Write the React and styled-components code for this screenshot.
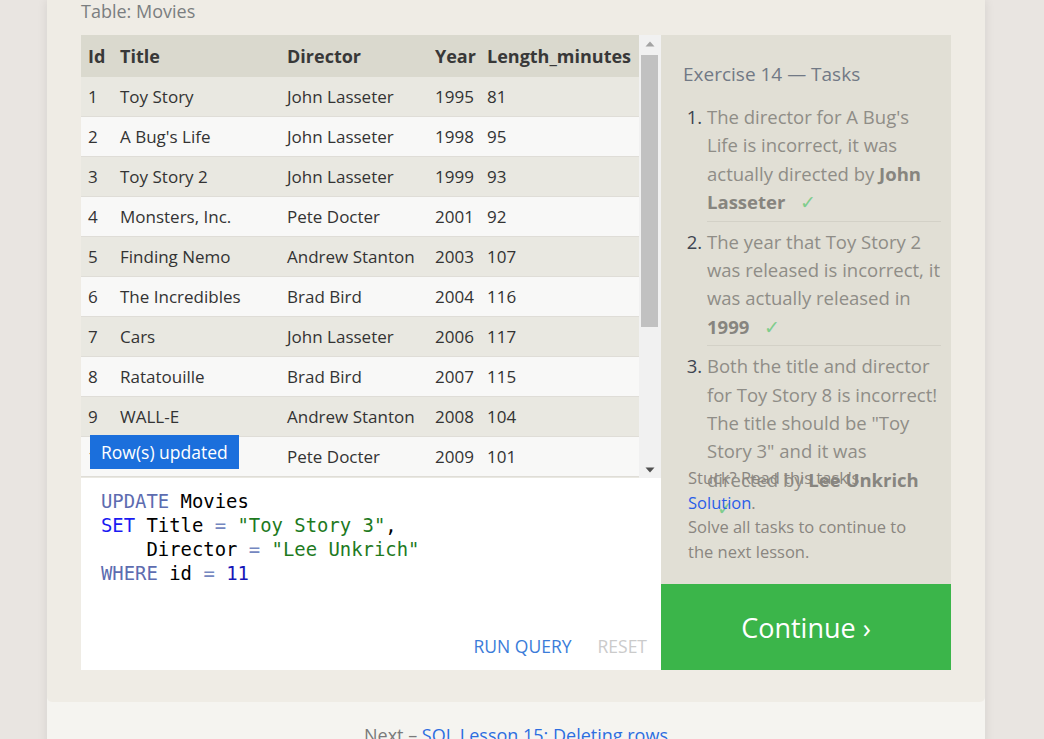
import React from "react";
import styled, { createGlobalStyle } from "styled-components";

const Global = createGlobalStyle`
  html, body { margin: 0; padding: 0; }
  body {
    background: #e9e5e1;
    font-family: "Open Sans", "Noto Sans", sans-serif;
    overflow: hidden;
  }
`;

const Page = styled.div`
  width: 938px;
  margin-left: 47px;
  min-height: 739px;
  background: #f5f4f0;
  box-shadow: 0 0 10px rgba(0, 0, 0, 0.09);
`;

const Card = styled.div`
  background: #efece5;
  padding: 0 34px 32px 34px;
  border-radius: 0 0 5px 5px;
`;

const Caption = styled.div`
  font-size: 18px;
  line-height: 22px;
  color: #7b7e80;
  margin-bottom: 13px;
`;

const Workspace = styled.div`
  display: flex;
  height: 635px;
`;

const LeftColumn = styled.div`
  position: relative;
  width: 580px;
  display: flex;
  flex-direction: column;
`;

const TableFrame = styled.div`
  height: 443px;
  display: flex;
  background: #f8f8f7;
`;

const TableViewport = styled.div`
  width: 558px;
  height: 100%;
  overflow: hidden;
`;

const ScrollBar = styled.div`
  width: 22px;
  background: #f1f1f1;
  display: flex;
  flex-direction: column;
`;

const ScrollButton = styled.div`
  height: 17px;
  display: flex;
  align-items: center;
  justify-content: center;
  padding-right: 1px;
`;

const ScrollTrack = styled.div`
  flex: 1;
  padding: 3px 3px 0 2px;
`;

const ScrollThumb = styled.div`
  height: 272px;
  background: #c1c1c1;
`;

const Table = styled.table`
  width: 558px;
  table-layout: fixed;
  border-collapse: collapse;
  font-size: 17px;
  color: #333;
`;

const HeadCell = styled.th`
  text-align: left;
  font-weight: 700;
  font-size: 18px;
  color: #383838;
  background: #dad9ce;
  height: 42px;
  padding: 0 0 0 7px;
  white-space: nowrap;
`;

const Row = styled.tr`
  background: ${(p) => (p.$odd ? "#e9e8e1" : "#f8f8f7")};
`;

const Cell = styled.td`
  height: 39px;
  padding: 0 0 0 7px;
  border-bottom: 1px solid #dfddd7;
  white-space: nowrap;
  overflow: hidden;
`;

const Toast = styled.div`
  position: absolute;
  left: 9px;
  top: 400px;
  height: 34px;
  padding: 0 11px;
  display: flex;
  align-items: center;
  background: #1b6fdc;
  color: #fff;
  font-size: 17.5px;
`;

const Editor = styled.div`
  height: 192px;
  background: #fff;
  display: flex;
  flex-direction: column;
`;

const Code = styled.pre`
  flex: 1;
  margin: 0;
  padding: 11px 20px 0;
  font-family: "DejaVu Sans Mono", "Liberation Mono", monospace;
  font-size: 18.9px;
  line-height: 24px;
  color: #000;
`;

const Tok = styled.span`
  color: ${(p) => p.$c};
`;

const EditorActions = styled.div`
  display: flex;
  justify-content: flex-end;
  gap: 26px;
  padding: 0 14px 14px 0;
`;

const ActionButton = styled.span`
  font-size: 17.5px;
  line-height: 20px;
  color: ${(p) => (p.$disabled ? "#cbcbcb" : "#3b7cd9")};
`;

const RightColumn = styled.div`
  width: 290px;
  display: flex;
  flex-direction: column;
`;

const TasksPanel = styled.div`
  flex: 1;
  background: #e1dfd5;
  padding: 27px 10px 0 22px;
  display: flex;
  flex-direction: column;
  min-height: 0;
`;

const TasksTitle = styled.div`
  font-size: 19px;
  line-height: 24px;
  color: #717985;
  margin-bottom: 11px;
`;

const TaskListArea = styled.div`
  height: 369px;
  flex: none;
`;

const TaskList = styled.ol`
  margin: 0;
  padding: 0 0 0 24px;
  font-size: 18.5px;
  line-height: 28.4px;
  color: #8f8d87;
`;

const Task = styled.li`
  padding: 6px 0 4px;
  border-bottom: ${(p) => (p.$last ? "none" : "1px solid #d3d1c7")};
  &::marker {
    color: #3d4450;
  }
`;

const Strong = styled.b`
  color: #87857f;
`;

const Check = styled.span`
  color: #7fcd8c;
  margin-left: 10px;
`;

const Hint = styled.div`
  width: 226px;
  margin-left: 5px;
  font-size: 16.5px;
  line-height: 24.7px;
  color: #8a8680;
`;

const HintLink = styled.a`
  color: #2a5ee8;
  text-decoration: none;
`;

const ContinueButton = styled.div`
  height: 86px;
  flex: none;
  background: #3bb54a;
  color: #fff;
  font-size: 27px;
  display: flex;
  align-items: center;
  justify-content: center;
`;

const Footer = styled.div`
  padding-top: 21px;
  text-align: center;
  font-size: 18px;
  line-height: 24px;
  color: #7a7a7a;
`;

const FooterLink = styled.a`
  color: #2d6ee0;
  text-decoration: none;
`;

const movies = [
  [1, "Toy Story", "John Lasseter", 1995, 81],
  [2, "A Bug's Life", "John Lasseter", 1998, 95],
  [3, "Toy Story 2", "John Lasseter", 1999, 93],
  [4, "Monsters, Inc.", "Pete Docter", 2001, 92],
  [5, "Finding Nemo", "Andrew Stanton", 2003, 107],
  [6, "The Incredibles", "Brad Bird", 2004, 116],
  [7, "Cars", "John Lasseter", 2006, 117],
  [8, "Ratatouille", "Brad Bird", 2007, 115],
  [9, "WALL-E", "Andrew Stanton", 2008, 104],
  [10, "Up", "Pete Docter", 2009, 101],
  [11, "Toy Story 3", "Lee Unkrich", 2010, 103],
  [12, "Cars 2", "John Lasseter", 2011, 120],
  [13, "Brave", "Brenda Chapman", 2012, 102],
  [14, "Monsters University", "Dan Scanlon", 2013, 110],
];

const KW = "#5d6cb0";
const SETC = "#1a1af2";
const OP = "#7487c0";
const STR = "#1e7a1e";
const NUM = "#1616b8";

const ArrowUp = () => (
  <svg width="10" height="6" viewBox="0 0 10 6">
    <path d="M0.5 5.5 L5 0.5 L9.5 5.5 Z" fill="#a3a3a3" />
  </svg>
);

const ArrowDown = () => (
  <svg width="10" height="6" viewBox="0 0 10 6">
    <path d="M0.5 0.5 L9.5 0.5 L5 5.5 Z" fill="#505050" />
  </svg>
);

export default function App() {
  return (
    <>
      <Global />
      <Page>
        <Card>
          <Caption>Table: Movies</Caption>
          <Workspace>
            <LeftColumn>
              <TableFrame>
                <TableViewport>
                  <Table>
                    <colgroup>
                      <col style={{ width: 32 }} />
                      <col style={{ width: 167 }} />
                      <col style={{ width: 148 }} />
                      <col style={{ width: 52 }} />
                      <col style={{ width: 159 }} />
                    </colgroup>
                    <thead>
                      <tr>
                        <HeadCell>Id</HeadCell>
                        <HeadCell>Title</HeadCell>
                        <HeadCell>Director</HeadCell>
                        <HeadCell>Year</HeadCell>
                        <HeadCell>Length_minutes</HeadCell>
                      </tr>
                    </thead>
                    <tbody>
                      {movies.map((m, i) => (
                        <Row key={m[0]} $odd={i % 2 === 0}>
                          {m.map((v, j) => (
                            <Cell key={j}>{v}</Cell>
                          ))}
                        </Row>
                      ))}
                    </tbody>
                  </Table>
                </TableViewport>
                <ScrollBar>
                  <ScrollButton>
                    <ArrowUp />
                  </ScrollButton>
                  <ScrollTrack>
                    <ScrollThumb />
                  </ScrollTrack>
                  <ScrollButton>
                    <ArrowDown />
                  </ScrollButton>
                </ScrollBar>
              </TableFrame>
              <Toast>Row(s) updated</Toast>
              <Editor>
                <Code>
                  <Tok $c={KW}>UPDATE</Tok> Movies{"\n"}
                  <Tok $c={SETC}>SET</Tok> Title <Tok $c={OP}>=</Tok>{" "}
                  <Tok $c={STR}>"Toy Story 3"</Tok>,{"\n"}
                  {"    "}Director <Tok $c={OP}>=</Tok>{" "}
                  <Tok $c={STR}>"Lee Unkrich"</Tok>
                  {"\n"}
                  <Tok $c={KW}>WHERE</Tok> id <Tok $c={OP}>=</Tok>{" "}
                  <Tok $c={NUM}>11</Tok>
                </Code>
                <EditorActions>
                  <ActionButton>RUN QUERY</ActionButton>
                  <ActionButton $disabled>RESET</ActionButton>
                </EditorActions>
              </Editor>
            </LeftColumn>
            <RightColumn>
              <TasksPanel>
                <TasksTitle>Exercise 14 — Tasks</TasksTitle>
                <TaskListArea>
                  <TaskList>
                    <Task>
                      The director for A Bug's Life is incorrect, it was actually
                      directed by <Strong>John Lasseter</Strong>{" "}
                      <Check>✓</Check>
                    </Task>
                    <Task>
                      The year that Toy Story 2 was released is incorrect, it was
                      actually released in <Strong>1999</Strong>{" "}
                      <Check>✓</Check>
                    </Task>
                    <Task $last>
                      Both the title and director for Toy Story 8 is incorrect!
                      The title should be "Toy Story 3" and it was directed by{" "}
                      <Strong>Lee Unkrich</Strong>{" "}
                      <Check>✓</Check>
                    </Task>
                  </TaskList>
                </TaskListArea>
                <Hint>
                  Stuck? Read this task's <HintLink>Solution</HintLink>.
                  <br />
                  Solve all tasks to continue to the next lesson.
                </Hint>
              </TasksPanel>
              <ContinueButton>Continue ›</ContinueButton>
            </RightColumn>
          </Workspace>
        </Card>
        <Footer>
          Next – <FooterLink>SQL Lesson 15: Deleting rows</FooterLink>
        </Footer>
      </Page>
    </>
  );
}
